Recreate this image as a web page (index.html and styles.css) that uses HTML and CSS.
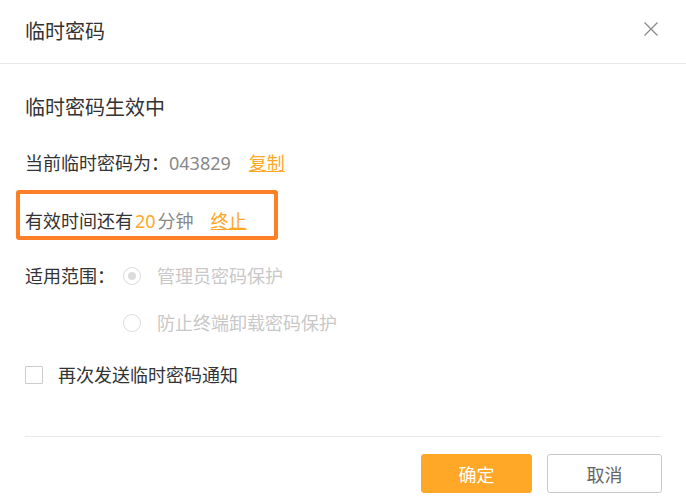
FILE: index.html
```html
<!DOCTYPE html>
<html lang="zh-CN">
<head>
<meta charset="utf-8">
<title>临时密码</title>
<link rel="stylesheet" href="styles.css">
</head>
<body>
<div class="dialog">
  <div class="header">
    <div class="title">临时密码</div>
    <svg class="close" width="14" height="14" viewBox="0 0 14 14"><path d="M0.5 0.5 L13.5 13.5 M13.5 0.5 L0.5 13.5" stroke="#8a8a8a" stroke-width="1.3" fill="none"/></svg>
  </div>
  <div class="content">
    <div class="subtitle">临时密码生效中</div>
    <div class="row">当前临时密码为：<span class="muted">043829</span><a class="link">复制</a></div>
    <div class="highlight">
      <div class="row inner">有效时间还有<span class="num">20</span><span class="muted">分钟</span><a class="link link2">终止</a></div>
    </div>
    <div class="scope">
      <div class="label">适用范围：</div>
      <div class="options">
        <div class="option"><span class="radio checked"></span>管理员密码保护</div>
        <div class="option second"><span class="radio"></span>防止终端卸载密码保护</div>
      </div>
    </div>
    <div class="check-row"><span class="checkbox"></span>再次发送临时密码通知</div>
  </div>
  <div class="footer">
    <button class="btn primary">确定</button>
    <button class="btn">取消</button>
  </div>
</div>
</body>
</html>
```

FILE: styles.css
```css
* { box-sizing: border-box; }
html, body { margin: 0; padding: 0; background: #fff; }
body {
  width: 686px;
  height: 498px;
  overflow: hidden;
  font-family: "Noto Sans", "Noto Sans CJK SC", sans-serif;
  color: #333;
}
.header {
  height: 64px;
  border-bottom: 1px solid #e8e8e8;
  display: flex;
  align-items: center;
  justify-content: space-between;
  padding: 0 28px 0 25px;
}
.title { font-size: 20px; line-height: 28px; }
.close { display: block; margin-bottom: 6px; }
.content { padding: 0 24px 0 25px; }
.subtitle { font-size: 20px; line-height: 28px; margin-top: 30px; }
.row { font-size: 18px; line-height: 28px; margin-top: 27px; white-space: nowrap; }
.muted { color: #888; }
.num { color: #ffa726; margin: 0 2px; }
.link { color: #ffa726; text-decoration: underline; margin-left: 18px; cursor: pointer; }
.link2 { margin-left: 17px; }
.highlight {
  margin-top: 13px;
  margin-left: -9px;
  width: 262px;
  height: 50px;
  border: 4px solid #ff7f27;
  border-radius: 3px;
  padding: 13px 0 0 5px;
}
.highlight .inner { margin-top: 0; }
.scope { display: flex; margin-top: 22px; font-size: 18px; line-height: 28px; }
.label { width: 98px; }
.option { display: flex; align-items: center; color: #c8c8c8; }
.option.second { margin-top: 19px; }
.radio {
  width: 18px; height: 18px;
  border: 1px solid #dcdcdc;
  border-radius: 50%;
  margin-right: 16px;
  display: flex; align-items: center; justify-content: center;
}
.radio.checked::after {
  content: "";
  width: 8px; height: 8px;
  border-radius: 50%;
  background: #dcdcdc;
}
.check-row {
  display: flex; align-items: center;
  margin-top: 24px;
  font-size: 18px; line-height: 28px;
  color: #333;
}
.checkbox {
  width: 18px; height: 18px;
  border: 1px solid #ccc;
  border-radius: 1px;
  margin-right: 15px;
}
.footer {
  margin: 47px 24px 0 25px;
  border-top: 1px solid #e8e8e8;
  padding-top: 17px;
  display: flex;
  justify-content: flex-end;
  gap: 15px;
}
.btn {
  height: 39px;
  width: 115px;
  border: 1px solid #c8c8c8;
  border-radius: 3px;
  background: #fff;
  color: #666;
  font-family: "Noto Sans", "Noto Sans CJK SC", sans-serif;
  font-size: 18px;
  padding: 0;
}
.btn.primary {
  width: 111px;
  background: #ffa726;
  border-color: #ffa726;
  color: #fff;
}
```
